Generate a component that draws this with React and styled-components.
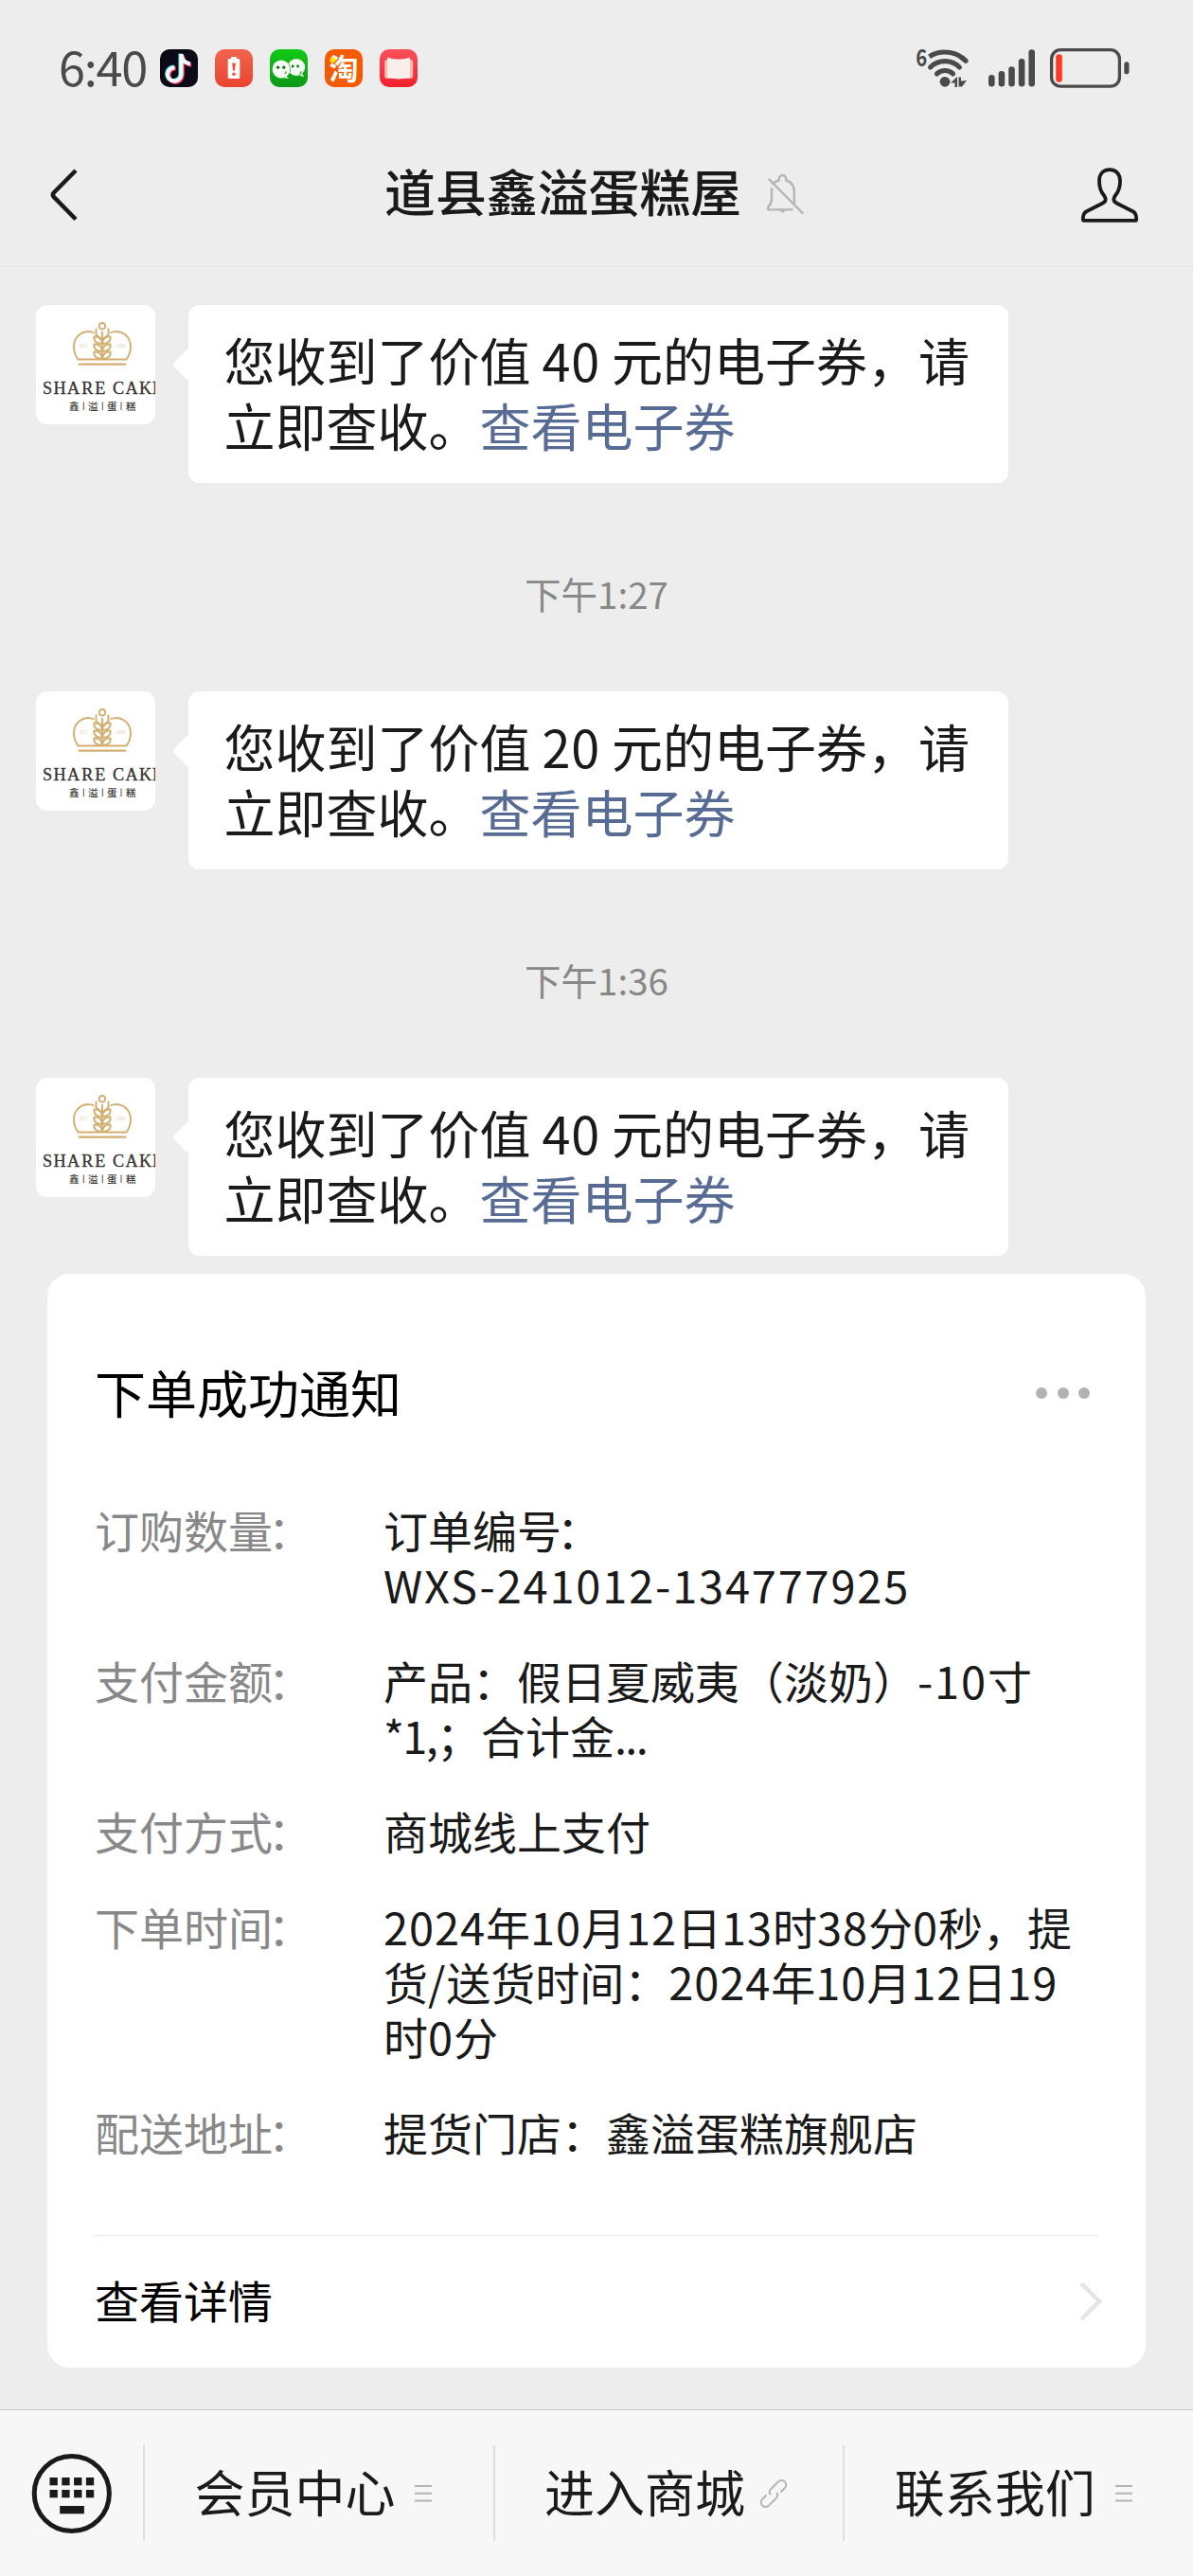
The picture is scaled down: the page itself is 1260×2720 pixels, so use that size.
import React from 'react';
import styled, { createGlobalStyle } from 'styled-components';

const GlobalStyle = createGlobalStyle`
  * {
    box-sizing: border-box;
  }
  body {
    margin: 0;
    background: #ededed;
    font-family: 'Noto Sans CJK SC', 'Noto Sans', sans-serif;
    color: #1a1a1a;
  }
  svg {
    display: block;
    flex: none;
  }
`;

const Screen = styled.div`
  display: flex;
  flex-direction: column;
  width: 1260px;
  height: 2720px;
  overflow: hidden;
  background: #ededed;
`;

const StatusBar = styled.div`
  display: flex;
  align-items: center;
  height: 144px;
  padding: 0 64px 0 62px;
`;

const Clock = styled.div`
  width: 107px;
  padding-bottom: 7px;
  color: #4a4a4a;
  font-size: 50.5px;
  line-height: 60px;
  letter-spacing: -1.3px;
  white-space: nowrap;
`;

const AppIcons = styled.div`
  display: flex;
  gap: 18px;
  margin-right: auto;
`;

const NavBar = styled.div`
  display: flex;
  align-items: center;
  height: 138px;
  padding: 0 56px 14px 52px;
  border-bottom: 1px solid #e2e2e2;
`;

const NavTitle = styled.h1`
  margin: 0 26px 0 323px;
  font-size: 53.9px;
  font-weight: 500;
  line-height: 70px;
  padding-bottom: 9px;
  white-space: nowrap;
`;

const NavEnd = styled.div`
  margin-left: auto;
`;

const Chat = styled.div`
  flex: 1;
  padding-top: 40px;
`;

const Message = styled.div`
  display: flex;
  align-items: flex-start;
  height: 188px;
  padding-left: 38px;
`;

const Avatar = styled.div`
  width: 126px;
  height: 126px;
  margin-right: 35px;
  border-radius: 12px;
  overflow: hidden;
  background: #fff;
`;

const Bubble = styled.div`
  position: relative;
  width: 866px;
  height: 188px;
  padding: 23px 0 0 37.5px;
  border-radius: 12px;
  background: #fff;
  font-size: 54px;
  line-height: 69px;
  white-space: nowrap;

  &::before {
    content: '';
    position: absolute;
    left: -12px;
    top: 50px;
    width: 26px;
    height: 26px;
    border-radius: 4px;
    background: #fff;
    transform: rotate(45deg);
  }
`;

const Amount = styled.span`
  margin: 0 12px 0 12px;
  letter-spacing: 0.8px;
`;

const BubbleLink = styled.a`
  color: #576b95;
`;

const Timestamp = styled.div`
  margin: 86px 0 74px;
  color: #888;
  font-size: 38.5px;
  line-height: 60px;
  text-align: center;
`;

const Card = styled.div`
  display: flex;
  flex-direction: column;
  height: 1155px;
  margin: 19px 50px 0;
  padding: 95px 50px 0;
  border-radius: 24px;
  background: #fff;
`;

const CardHeader = styled.div`
  display: flex;
  align-items: center;
  justify-content: space-between;
  padding-right: 9px;
  color: #000;
  font-size: 54px;
  line-height: 60px;
`;

const Dots = styled.div`
  display: flex;
  gap: 10.5px;
  padding-top: 2px;

  i {
    width: 12px;
    height: 12px;
    border-radius: 50%;
    background: #b2b2b2;
  }
`;

const Rows = styled.div`
  display: flex;
  flex-direction: column;
  gap: 42.6px;
  margin-top: 86px;
  font-size: 47px;
  line-height: 58.2px;
  white-space: nowrap;
`;

const Row = styled.div`
  display: flex;
`;

const Label = styled.div`
  width: 305px;
  color: #888;
`;

const Latin = styled.span`
  letter-spacing: ${props => props.$spacing}px;
`;

/* pulls a closing colon towards the text before it */
const Colon = styled.span`
  margin-left: -5px;
`;

const Divider = styled.div`
  height: 1px;
  margin-top: 80px;
  background: #e5e5e5;
`;

const CardFooter = styled.div`
  display: flex;
  flex: 1;
  align-items: center;
  justify-content: space-between;
  margin-right: -5px;
  padding-bottom: 2px;
  color: #000;
  font-size: 47px;
  line-height: 60px;

  span {
    padding-bottom: 3px;
  }
`;

const BottomBar = styled.div`
  display: flex;
  align-items: center;
  height: 176px;
  border-top: 1px solid #c8c8c8;
  background: #f7f7f7;
`;

const KeyboardButton = styled.div`
  width: 151px;
  padding-left: 33px;
`;

const MenuItem = styled.div`
  display: flex;
  align-items: center;
  gap: ${props => props.$gap}px;
  width: 370px;
  height: 101px;
  padding-left: 52.5px;
  border-left: 2px solid #dedede;
  font-size: 53px;
  white-space: nowrap;

  span {
    padding-bottom: 6px;
  }
`;

const TiktokIcon = () => {
  const note = 'M22.5 5v21.5a7.2 7.2 0 1 1-7-7.2M22.5 6c1 6 4 9 9.5 9.5';
  return (
    <svg width="40" height="40" fill="none" strokeWidth="4.2">
      <rect width="40" height="40" rx="10" fill="#0b0a16" />
      <path d={note} stroke="#3fe0dc" transform="translate(-1 -.6)" />
      <path d={note} stroke="#f5345c" transform="translate(1.2 1.2)" />
      <path d={note} stroke="#f4f8f8" />
    </svg>
  );
};

const LowBatteryIcon = () => (
  <svg width="40" height="40">
    <defs>
      <linearGradient id="alert" x2="0" y2="1">
        <stop stopColor="#f0654f" />
        <stop offset="1" stopColor="#ea432f" />
      </linearGradient>
    </defs>
    <rect width="40" height="40" rx="10" fill="url(#alert)" />
    <rect x="17" y="8" width="6" height="3" rx="1" fill="#fff" />
    <rect x="13.7" y="10" width="12.6" height="21" rx="1.5" fill="#fff" />
    <path d="M18.2 14.5h3.6l-.8 8h-2z" fill="#ec4c38" />
    <circle cx="20" cy="26.3" r="1.7" fill="#ec4c38" />
  </svg>
);

const WechatIcon = () => (
  <svg width="40" height="40">
    <defs>
      <linearGradient id="wechat" x2="0" y2="1">
        <stop stopColor="#12cc16" />
        <stop offset="1" stopColor="#0c9718" />
      </linearGradient>
    </defs>
    <rect width="40" height="40" rx="10" fill="url(#wechat)" />
    <ellipse cx="28" cy="19" rx="9.2" ry="9" fill="#f1fbf1" />
    <path d="M34 26l2.5 3-5-1z" fill="#f1fbf1" />
    <circle cx="12" cy="21" r="10" fill="#0fae17" />
    <circle cx="12" cy="21" r="9.4" fill="#f5fdf5" />
    <path d="M17 28l3 3-6-1z" fill="#f5fdf5" />
    <g fill="#146b1c">
      <circle cx="8.6" cy="19.2" r="1.6" />
      <circle cx="14.8" cy="19.2" r="1.6" />
      <circle cx="24.2" cy="18" r="1.4" />
      <circle cx="29.6" cy="18" r="1.4" />
    </g>
    <path
      d="M15.5 26q2-.8 1.6-2.6M31.5 26q2-.8 1.6-2.6"
      fill="none"
      stroke="#146b1c"
      strokeWidth="1"
    />
  </svg>
);

const TaobaoIcon = () => (
  <svg width="40" height="40">
    <rect width="40" height="40" rx="10" fill="#f55a00" />
    <text
      x="4.4"
      y="31.5"
      fontSize="31"
      fontWeight="700"
      fill="#fff"
      fontFamily="'Noto Sans CJK SC', sans-serif"
    >
      淘
    </text>
    <circle cx="8.4" cy="11.5" r="3" fill="#ffe400" />
  </svg>
);

const BookIcon = () => (
  <svg width="40" height="40">
    <defs>
      <linearGradient id="book" x2="0" y2="1">
        <stop stopColor="#f8525a" />
        <stop offset="1" stopColor="#f3202c" />
      </linearGradient>
    </defs>
    <rect width="40" height="40" rx="10" fill="url(#book)" />
    <rect x="5.2" y="11" width="30" height="20" rx="3" fill="#fbb9b6" />
    <path
      d="M8 8.5q6 2.5 12 2 6 .5 12-2V29.5q-6 1.5-12 2-6-.5-12-2z"
      fill="#f8efec"
    />
  </svg>
);

const StatusIcons = () => (
  <svg width="232" height="48" viewBox="964 48 232 48" fill="#4a4a4a">
    <text
      x="967.3"
      y="69.5"
      fontSize="25"
      fontWeight="700"
      textLength="12"
      lengthAdjust="spacingAndGlyphs"
      fontFamily="'Noto Sans CJK SC', sans-serif"
    >
      6
    </text>
    <g fill="none" stroke="#4a4a4a" strokeWidth="5.2">
      <path d="M981.5 59.7Q989 55 998 55q12 0 20 7.5" />
      <path d="M1017 61.7l3 2.6" strokeLinecap="round" />
      <path d="M982.6 71q6.4-6.3 15.4-6.3t15.4 6.3" strokeLinecap="round" />
      <path d="M989.5 77.9q3.5-3.4 8.5-3.4t8.5 3.4" strokeLinecap="round" />
    </g>
    <circle cx="998" cy="86.3" r="5.4" />
    <path d="M1004 87.5l7-6.500v11h-2.500v-4.500zM1012.500 81.500h2.500v4l6-.5-5 6.500h-3.500z" />
    {[79, 75, 70.3, 62, 52.3].map((top, i) => (
      <rect
        key={top}
        x={1044 + i * 10.6}
        y={top}
        width="6.6"
        height={91.6 - top}
        rx="3.3"
      />
    ))}
    <rect
      x="1110.6"
      y="52.7"
      width="71.8"
      height="38.5"
      rx="9.5"
      fill="none"
      stroke="#4a4a4a"
      strokeWidth="3.3"
    />
    <rect x="1115.2" y="57.2" width="6.6" height="29.5" rx="3" fill="#ff3a24" />
    <rect x="1187.3" y="65.3" width="5.2" height="13" rx="2.6" />
  </svg>
);

const BackIcon = () => (
  <svg width="31" height="56" viewBox="0 0 31 56">
    <path
      d="M28 2L4.8 25.5q-2 2.2 0 4.4L28 53.5"
      fill="none"
      stroke="#1a1a1a"
      strokeWidth="4.5"
    />
  </svg>
);

const MutedBell = () => (
  <svg width="40" height="46" viewBox="0 0 40 46">
    <g fill="none" stroke="#b4b4b4" strokeWidth="2.4">
      <path d="M6 15.5v11q0 5-3.8 9.5-1 2.2 1 2.4h25.3" />
      <path d="M6.5 11.5q2.5-2.9 7-4 .2-5.5 4-5.5t4 5.5q8.300 2.500 8.300 12v9q0 1.500.5 3" />
      <path d="M3.4 6.5l35.2 35.5" strokeLinecap="round" />
    </g>
    <path d="M14.6 38.5h6q-.8 3-3 3t-3-3z" fill="#b4b4b4" />
  </svg>
);

const PersonIcon = () => (
  <svg width="64" height="62" viewBox="0 0 64 62">
    <path
      d="M32 4.2c-7 0-11 4.8-11 12 0 14 6.5 14 6.7 19 0 2.5-1.2 3.5-3.5 4.6L7.5 48.2c-3.2 1.6-3.9 3.8-3.7 8.8q.1.9 1 .9h54.4q.9 0 1-.9c.2-5-.5-7.2-3.7-8.8L39.8 39.8c-2.3-1.1-3.500-2.100-3.500-4.600.2-5 6.700-5 6.700-19 0-7.200-4-12-11-12z"
      fill="none"
      stroke="#1a1a1a"
      strokeWidth="3.8"
    />
  </svg>
);

const ShopLogo = () => (
  <svg width="126" height="126" viewBox="0 0 126 126">
    <g fill="none" stroke="#d3ae70" strokeWidth="1.9">
      <circle cx="70" cy="22.3" r="3.3" />
      <path d="M70 28v29M63.5 24.5v7l6.5 5 6.5-5v-7" />
      <path d="M61.5 29.5c-11-5-21.5 3.5-21.5 14.5 0 6 2 10 4.5 13.5h51c2.5-3.5 4.5-7.5 4.5-13.5 0-11-10.5-19.5-21.5-14.5" />
      {[32, 40, 48].map(y => (
        <path
          key={y}
          d={`M70 ${y + 9}c-6 0-9.5-3-8.5-7.5 4.5-.5 8 2 8.5 7.5 6 0 9.5-3 8.5-7.5-4.5-.5-8 2-8.5 7.5z`}
        />
      ))}
      <path d="M44.7 62.6h50.6" strokeWidth="2.4" />
    </g>
    <g fill="#e4d6bd" fontSize="4.5" fontFamily="'Liberation Sans', sans-serif">
      <text x="46" y="44.8">EST</text>
      <text x="84.5" y="44.8">1988</text>
    </g>
    <g
      fill="#33322d"
      stroke="#33322d"
      strokeWidth=".3"
      fontSize="18.2"
      fontFamily="'Liberation Serif', serif"
    >
      <text x="7 18.6 33 48.2 62.2" y="94.3">SHARE</text>
      <text x="81 94.5 109 123" y="94.3">CAKE</text>
    </g>
    <g
      fill="#3c3b36"
      fontSize="10.5"
      fontWeight="500"
      fontFamily="'Noto Sans CJK SC', sans-serif"
    >
      <text x="35" y="110.5">鑫</text>
      <text x="55" y="110.5">溢</text>
      <text x="75" y="110.5">蛋</text>
      <text x="95" y="110.5">糕</text>
    </g>
    <path d="M50.3 102.5v8.5M70.3 102.5v8.5M90 102.5v8.5" stroke="#55544f" />
  </svg>
);

const ArrowIcon = () => (
  <svg width="25" height="42" viewBox="0 0 25 42">
    <path d="M2 2l19 19L2 40" fill="none" stroke="#e5e5e5" strokeWidth="4.5" />
  </svg>
);

const KeyboardIcon = () => (
  <svg width="86" height="86" viewBox="33 2590 86 86">
    <circle
      cx="75.8"
      cy="2633"
      r="39.6"
      fill="none"
      stroke="#1a1a1a"
      strokeWidth="5"
    />
    {[52.5, 65.3, 78.1, 90.9].map(x => (
      <g key={x} fill="#1a1a1a">
        <rect x={x} y="2616" width="8.3" height="8.3" />
        <rect x={x} y="2629" width="8.3" height="8.3" />
      </g>
    ))}
    <rect x="63.2" y="2646" width="25.7" height="8.3" fill="#1a1a1a" />
  </svg>
);

const ListIcon = () => (
  <svg width="18" height="20" viewBox="0 0 18 20">
    <path d="M0 2h18M0 9.8h18M0 17.6h18" stroke="#b4b4b4" strokeWidth="2" />
  </svg>
);

const LinkIcon = () => (
  <svg width="30" height="30" viewBox="0 0 30 30">
    <g fill="none" stroke="#b4b4b4" strokeWidth="2">
      <path d="M7.5 16.5l-4.3 4.3a4.8 4.8 0 0 0 6.8 6.8l7.6-7.6a4.8 4.8 0 0 0 .6-6.2" />
      <path d="M22.5 13.5l4.3-4.3a4.8 4.8 0 0 0-6.8-6.8l-7.6 7.6a4.8 4.8 0 0 0-.6 6.2" />
    </g>
  </svg>
);

const order = [
  {
    label: '订购数量\uff1a',
    lines: ['订单编号\uff1a', 'WXS-241012-134777925'],
  },
  {
    label: '支付金额\uff1a',
    lines: [
      '产品\uff1a假日夏威夷\uff08淡奶\uff09-10寸',
      '*1,\uff1b合计金...',
    ],
  },
  { label: '支付方式\uff1a', lines: ['商城线上支付'] },
  {
    label: '下单时间\uff1a',
    lines: [
      '2024年10月12日13时38分0秒\uff0c提',
      '货/送货时间\uff1a2024年10月12日19',
      '时0分',
    ],
  },
  { label: '配送地址\uff1a', lines: ['提货门店\uff1a鑫溢蛋糕旗舰店'] },
];

// tighter for punctuation, looser for runs with a hyphen
const latinSpacing = part => {
  if (/[.*]/.test(part)) return -1.7;
  return /-/.test(part) ? 1.8 : 0.9;
};

const renderLine = text =>
  text.split(/([\x21-\x7e]+|\uff1a$)/).map((part, i) => {
    if (part === '\uff1a') return <Colon key={i}>{part}</Colon>;
    return i % 2 ? (
      <Latin key={i} $spacing={latinSpacing(part)}>
        {part}
      </Latin>
    ) : (
      part
    );
  });

const CouponMessage = ({ amount }) => (
  <Message>
    <Avatar>
      <ShopLogo />
    </Avatar>
    <Bubble>
      您收到了价值<Amount>{amount}</Amount>
      {'元的电子券\uff0c请'}
      <br />
      立即查收。<BubbleLink>查看电子券</BubbleLink>
    </Bubble>
  </Message>
);

const App = () => (
  <>
    <GlobalStyle />
    <Screen>
      <StatusBar>
        <Clock>6:40</Clock>
        <AppIcons>
          <TiktokIcon />
          <LowBatteryIcon />
          <WechatIcon />
          <TaobaoIcon />
          <BookIcon />
        </AppIcons>
        <StatusIcons />
      </StatusBar>
      <NavBar>
        <BackIcon />
        <NavTitle>道县鑫溢蛋糕屋</NavTitle>
        <MutedBell />
        <NavEnd>
          <PersonIcon />
        </NavEnd>
      </NavBar>
      <Chat>
        <CouponMessage amount={40} />
        <Timestamp>下午1:27</Timestamp>
        <CouponMessage amount={20} />
        <Timestamp>下午1:36</Timestamp>
        <CouponMessage amount={40} />
        <Card>
          <CardHeader>
            下单成功通知
            <Dots>
              <i />
              <i />
              <i />
            </Dots>
          </CardHeader>
          <Rows>
            {order.map(row => (
              <Row key={row.label}>
                <Label>{renderLine(row.label)}</Label>
                <div>
                  {row.lines.map(line => (
                    <div key={line}>{renderLine(line)}</div>
                  ))}
                </div>
              </Row>
            ))}
          </Rows>
          <Divider />
          <CardFooter>
            <span>查看详情</span>
            <ArrowIcon />
          </CardFooter>
        </Card>
      </Chat>
      <BottomBar>
        <KeyboardButton>
          <KeyboardIcon />
        </KeyboardButton>
        <MenuItem $gap={21}>
          <span>会员中心</span>
          <ListIcon />
        </MenuItem>
        <MenuItem $gap={15}>
          <span>进入商城</span>
          <LinkIcon />
        </MenuItem>
        <MenuItem $gap={21}>
          <span>联系我们</span>
          <ListIcon />
        </MenuItem>
      </BottomBar>
    </Screen>
  </>
);

export default App;
